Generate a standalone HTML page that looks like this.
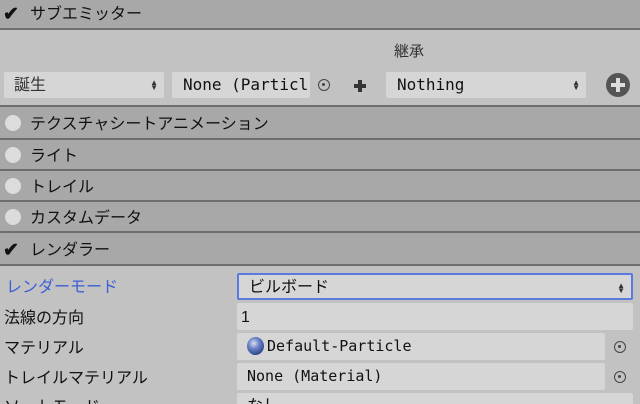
<!DOCTYPE html>
<html><head><meta charset="utf-8"><style>
*{margin:0;padding:0;box-sizing:border-box}
html,body{width:640px;height:404px;overflow:hidden}
body{background:#c2c2c2;font-family:"Liberation Sans","Noto Sans CJK JP",sans-serif;font-size:16px;line-height:1;color:#111;position:relative}
.a{position:absolute;line-height:1;white-space:nowrap}
.h{position:absolute;left:0;width:640px;background:#a8a8a8;border-bottom:2px solid #6e6e6e}
.h .c{position:absolute;left:5px;width:16px;height:16px;border-radius:50%;background:#dcdcdc}
.h .t{position:absolute;left:30px;line-height:1}
.f{position:absolute;background:#d6d6d6;border-radius:2px}
.ck{position:absolute;left:3px;font-size:19px;font-weight:bold;line-height:1}
.ar{position:absolute;right:6px;font-size:8px;line-height:5px;color:#333;text-align:center}
.o{position:absolute;width:12px;height:12px;border:1.5px solid #444;border-radius:50%}
.o:after{content:"";position:absolute;left:3px;top:3px;width:3px;height:3px;background:#444;border-radius:50%}
.m{font-family:'DejaVu Sans Mono','Liberation Mono',monospace}
</style></head><body>
<div class="h" style="top:0;height:30px"><div class="ck" style="top:5px">✔</div><div class="t" style="top:7px">サブエミッター</div></div>
<div class="a" style="left:394px;top:44px;font-size:15px;color:#333">継承</div>
<div class="f" style="left:4px;top:72px;width:160px;height:26px"><span class="a" style="left:10px;top:6px;color:#333">誕生</span><div class="ar" style="top:8px">▲<br>▼</div></div>
<div class="f" style="left:172px;top:72px;width:138px;height:26px"><span class="a m" style="left:11px;top:5px">None (Particl</span></div>
<div class="o" style="left:318px;top:79px"></div>
<div class="a" style="left:354px;top:84px;width:12px;height:4px;background:#333"></div>
<div class="a" style="left:358px;top:80px;width:4px;height:12px;background:#333"></div>
<div class="f" style="left:386px;top:72px;width:200px;height:26px"><span class="a m" style="left:11px;top:5px">Nothing</span><div class="ar" style="top:8px">▲<br>▼</div></div>
<div class="a" style="left:606px;top:73px;width:24px;height:24px;border-radius:50%;background:#555"></div>
<div class="a" style="left:611px;top:83px;width:14px;height:4px;background:#ddd"></div>
<div class="a" style="left:616px;top:78px;width:4px;height:14px;background:#ddd"></div>
<div class="a" style="left:0;top:105px;width:640px;height:2px;background:#6e6e6e"></div>
<div class="h" style="top:107px;height:33px"><div class="c" style="top:8px"></div><div class="t" style="top:10px">テクスチャシートアニメーション</div></div>
<div class="h" style="top:140px;height:31px"><div class="c" style="top:7px"></div><div class="t" style="top:9px">ライト</div></div>
<div class="h" style="top:171px;height:31px"><div class="c" style="top:7px"></div><div class="t" style="top:9px">トレイル</div></div>
<div class="h" style="top:202px;height:31px"><div class="c" style="top:7px"></div><div class="t" style="top:9px">カスタムデータ</div></div>
<div class="h" style="top:233px;height:33px"><div class="ck" style="top:8px">✔</div><div class="t" style="top:10px">レンダラー</div></div>
<div class="a" style="left:6px;top:280px;color:#3d5fd6">レンダーモード</div>
<div class="f" style="left:237px;top:273px;width:396px;height:27px;border:2px solid #5a7ae0"><span class="a" style="left:10px;top:5px">ビルボード</span><div class="ar" style="top:8px">▲<br>▼</div></div>
<div class="a" style="left:4px;top:311px">法線の方向</div>
<div class="f" style="left:237px;top:303px;width:396px;height:27px"><span class="a" style="left:4px;top:7px">1</span></div>
<div class="a" style="left:4px;top:341px">マテリアル</div>
<div class="f" style="left:237px;top:333px;width:368px;height:27px"><span class="a" style="left:10px;top:4px;width:17px;height:18px;border-radius:50%;background:radial-gradient(circle at 40% 35%,#dde 0,#6a82c8 35%,#2a3f80 80%)"></span><span class="a m" style="left:30px;top:6px;font-size:15px">Default-Particle</span></div>
<div class="o" style="left:614px;top:341px"></div>
<div class="a" style="left:4px;top:371px">トレイルマテリアル</div>
<div class="f" style="left:237px;top:363px;width:368px;height:27px"><span class="a m" style="left:10px;top:6px;font-size:15px">None (Material)</span></div>
<div class="o" style="left:614px;top:371px"></div>
<div class="a" style="left:4px;top:400px">ソートモード</div>
<div class="f" style="left:237px;top:393px;width:396px;height:27px"><span class="a" style="left:10px;top:6px">なし</span></div>
</body></html>
